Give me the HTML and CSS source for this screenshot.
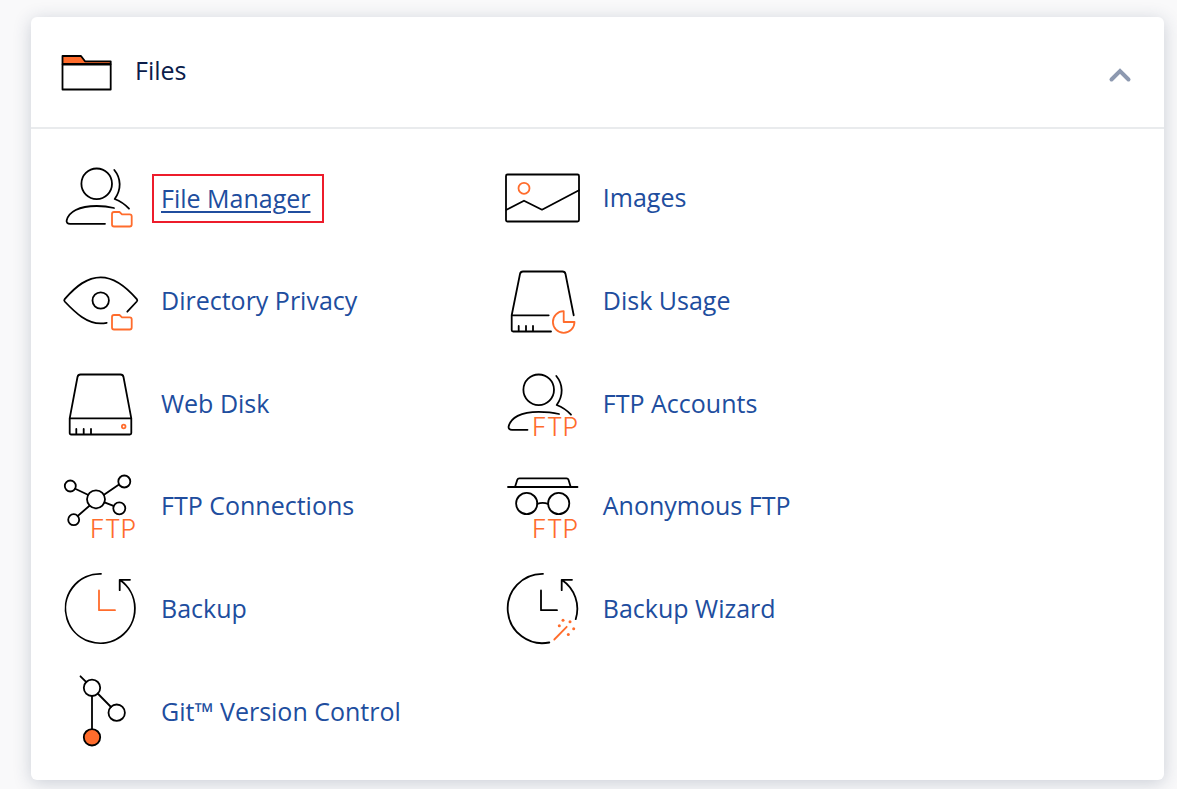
FILE: index.html
```html
<!DOCTYPE html>
<html lang="en">
<head>
    <meta charset="UTF-8">
    <meta name="viewport" content="width=device-width, initial-scale=1.0">
    <title>Files</title>
    <link rel="stylesheet" href="styles.css">
</head>
<body>
    <!-- Shared icon parts -->
    <svg class="defs" width="0" height="0" aria-hidden="true">
        <symbol id="mini-folder" viewBox="0 0 80 80">
            <path class="accent" d="M51 56q0-2 2-2h5.500l2.500 2.300h7.700q2 0 2 2v8.200q0 2-2 2H53q-2 0-2-2z"/>
        </symbol>
        <symbol id="user-head" viewBox="0 0 80 80">
            <circle cx="35.700" cy="25.800" r="15.300"/>
            <path d="M53.300 12c7 8.500 7.200 19.500.4 29 5.300 2 10 5 14.300 9.700"/>
        </symbol>
    </svg>

    <section class="panel">
        <header class="panel-header">
            <svg class="folder-icon" viewBox="0 0 52 40" aria-hidden="true">
                <path class="filled" d="M1.500 12V4h18.500l4 5.300h25.700V12z"/>
                <path d="M1.500 12.500h48.200v25H1.500z"/>
            </svg>
            <h1>Files</h1>
            <button class="toggle" type="button" aria-label="Collapse Files" aria-expanded="true">
                <svg viewBox="0 0 24 16" aria-hidden="true"><path d="M3.500 12.500l8.500-8.500 8.500 8.500"/></svg>
            </button>
        </header>

        <ul class="items">
            <li class="item">
                <svg class="icon" viewBox="0 0 80 80" aria-hidden="true">
                    <use href="#user-head"/>
                    <path d="M53 50c-6-1.500-11.500-2-17.300-2-18 0-28 6-30 14.300-.5 2 .8 3.500 3.300 3.500h35"/>
                    <use href="#mini-folder"/>
                </svg>
                <a class="marked" href="#">File Manager</a>
            </li>
            <li class="item">
                <svg class="icon" viewBox="0 0 80 80" aria-hidden="true">
                    <rect x="3" y="16.500" width="73" height="47" rx="1.500"/>
                    <path d="M3.500 51.700L21 42.700l18 9 37-19.400"/>
                    <circle class="accent" cx="21" cy="30.300" r="5.500"/>
                </svg>
                <a href="#">Images</a>
            </li>
            <li class="item">
                <svg class="icon" viewBox="0 0 80 80" aria-hidden="true">
                    <path d="M45.700 61.800c-2 .4-4 .6-6 .6C26 62.400 15 52.500 3.700 40.500q-1-1.200 0-2.400C15 25 26 16.300 39.700 16.300S64.500 25 75.800 38.100q1 1.200 0 2.400L66.300 50.700"/>
                    <circle cx="39.700" cy="39.500" r="8.200"/>
                    <use href="#mini-folder"/>
                </svg>
                <a href="#">Directory Privacy</a>
            </li>
            <li class="item">
                <svg class="icon" viewBox="0 0 80 80" aria-hidden="true">
                    <path d="M70.700 54.300L62.500 13q-.5-2.500-3-2.500H20q-2.500 0-3 2.500L8.700 54.300V69q0 1.500 1.500 1.500H48M8.700 54.300h37M15.700 65v5M23 65v5M30 65v5"/>
                    <path class="accent" d="M60.700 50.200a10.800 10.800 0 1 0 10.800 10.800H60.700z"/>
                </svg>
                <a href="#">Disk Usage</a>
            </li>
            <li class="item">
                <svg class="icon" viewBox="0 0 80 80" aria-hidden="true">
                    <path d="M8.700 54.300L16.500 13q.5-2.500 3-2.500h40q2.500 0 3 2.500l7.800 41.300V69q0 1.500-1.500 1.500H10.200q-1.500 0-1.500-1.500zH70.300M15.300 65v5M22.700 65v5M30 65v5"/>
                    <circle class="accent" cx="62.700" cy="62.500" r="1.800"/>
                </svg>
                <a href="#">Web Disk</a>
            </li>
            <li class="item">
                <svg class="icon" viewBox="0 0 80 80" aria-hidden="true">
                    <use href="#user-head"/>
                    <path d="M56 50c-6-1.500-14-2.200-20.300-2.200-18 0-28 6-30 14.500-.5 2 .8 3.500 3.300 3.500h15.500"/>
                    <text x="29" y="72">FTP</text>
                </svg>
                <a href="#">FTP Accounts</a>
            </li>
            <li class="item">
                <svg class="icon" viewBox="0 0 80 80" aria-hidden="true">
                    <path d="M14.200 22.700l12.700 6.100M43 28.800l15-10.400M43.500 36.300l9 3.600M28.500 39.700L16.700 50"/>
                    <circle cx="35" cy="33.300" r="9"/>
                    <circle cx="9.300" cy="20" r="5.500"/>
                    <circle cx="63.300" cy="15.500" r="6"/>
                    <circle cx="58.300" cy="42.300" r="6"/>
                    <circle cx="12.700" cy="53.700" r="5.500"/>
                    <text x="29" y="72">FTP</text>
                </svg>
                <a href="#">FTP Connections</a>
            </li>
            <li class="item">
                <svg class="icon" viewBox="0 0 80 80" aria-hidden="true">
                    <path d="M5 21h69.500M12 21l2.300-7.200q.5-1.500 2-1.500h47.200q1.500 0 2 1.500L67.700 21M34.300 37.800q5.400-2 10.700 0"/>
                    <circle cx="23.700" cy="37.500" r="10.600"/>
                    <circle cx="55.700" cy="37.500" r="10.600"/>
                    <text x="29" y="72">FTP</text>
                </svg>
                <a href="#">Anonymous FTP</a>
            </li>
            <li class="item">
                <svg class="icon" viewBox="0 0 80 80" aria-hidden="true">
                    <path d="M40 4.800A34.700 34.700 0 1 0 59 11M69 10.800H58.700v10.400"/>
                    <path class="accent" d="M38 21.500v19.700h16"/>
                </svg>
                <a href="#">Backup</a>
            </li>
            <li class="item">
                <svg class="icon" viewBox="0 0 80 80" aria-hidden="true">
                    <path d="M40 4.800A34.700 34.700 0 1 0 46.300 73.500M72.700 50.200A34.700 34.700 0 0 0 59 11M69 10.800H58.700v10.400M38 21.500v19.700h16"/>
                    <path class="accent" d="M51.300 70.500l12.400-12.700"/>
                    <g class="sparks">
                        <circle cx="56.300" cy="56.800" r="1.500"/>
                        <circle cx="60" cy="51.200" r="1.500"/>
                        <circle cx="67" cy="52.800" r="1.500"/>
                        <circle cx="70.700" cy="59.800" r="1.500"/>
                        <circle cx="65.300" cy="65.500" r="1.500"/>
                    </g>
                </svg>
                <a href="#">Backup Wizard</a>
            </li>
            <li class="item">
                <svg class="icon" viewBox="0 0 80 80" aria-hidden="true">
                    <path d="M19.500 4.300l5.800 5.800M36.700 21.500L50 35M31 24v33"/>
                    <circle cx="31" cy="15.800" r="8.200"/>
                    <circle cx="55.700" cy="40.700" r="8.200"/>
                    <circle class="filled" cx="31" cy="65.300" r="8.200"/>
                </svg>
                <a href="#">Git™ Version Control</a>
            </li>
        </ul>
    </section>
</body>
</html>
```
FILE: styles.css
```css
* {
    box-sizing: border-box;
}
body {
    margin: 0;
    padding: 17px 13px 9px 31px;
    background-color: #f9f9fa;
    font-family: "Open Sans", "Noto Sans", sans-serif;
    font-size: 25px;
    line-height: 34px;
    color: #0b1c4a;
}
.defs {
    position: absolute;
}
.panel {
    background-color: #fff;
    border-radius: 6px;
    box-shadow: 0 3px 18px rgba(40, 60, 90, 0.22);
}
.panel-header {
    display: flex;
    align-items: center;
    height: 112px;
    padding: 0 30px;
    border-bottom: 2px solid #e9ebed;
}
.folder-icon {
    width: 52px;
    height: 40px;
    margin-right: 22px;
}
h1 {
    flex: 1;
    margin: 0;
    padding-bottom: 4px;
    font-size: 25px;
    font-weight: 400;
}
.toggle {
    padding: 6px 2px 0;
    border: 0;
    background: none;
    cursor: pointer;
}
.toggle svg {
    display: block;
    width: 24px;
    height: 16px;
    fill: none;
    stroke: #8d99b0;
    stroke-width: 4;
    stroke-linecap: round;
}
.items {
    display: grid;
    grid-template-columns: 7fr 10fr;
    grid-template-rows: repeat(6, 1fr);
    min-height: 651px;
    margin: 0;
    padding: 18px 30px 17px;
    list-style: none;
}
.item {
    display: flex;
    align-items: center;
    gap: 20px;
}
.item a {
    padding-bottom: 2px;
    color: #204d9e;
    text-decoration: none;
}
.item a:hover {
    text-decoration: underline;
}
.item .marked {
    margin-left: -9px;
    padding: 5px 11px 6px 7px;
    border: 2px solid #ed1c2b;
    text-decoration: underline;
    text-decoration-thickness: 2px;
    text-underline-offset: 3px;
}
.icon,
.folder-icon {
    flex: none;
    fill: none;
    stroke: #000;
    stroke-width: 1.8;
    stroke-linecap: round;
    stroke-linejoin: round;
}
.icon {
    width: 80px;
    height: 80px;
}
.accent {
    stroke: #ff6c2c;
}
.filled {
    fill: #ff6c2c;
}
.sparks,
.icon text {
    fill: #ff6c2c;
    stroke: none;
}
.icon text {
    font-family: Inter, sans-serif;
    font-size: 25px;
    font-weight: 300;
}
```
